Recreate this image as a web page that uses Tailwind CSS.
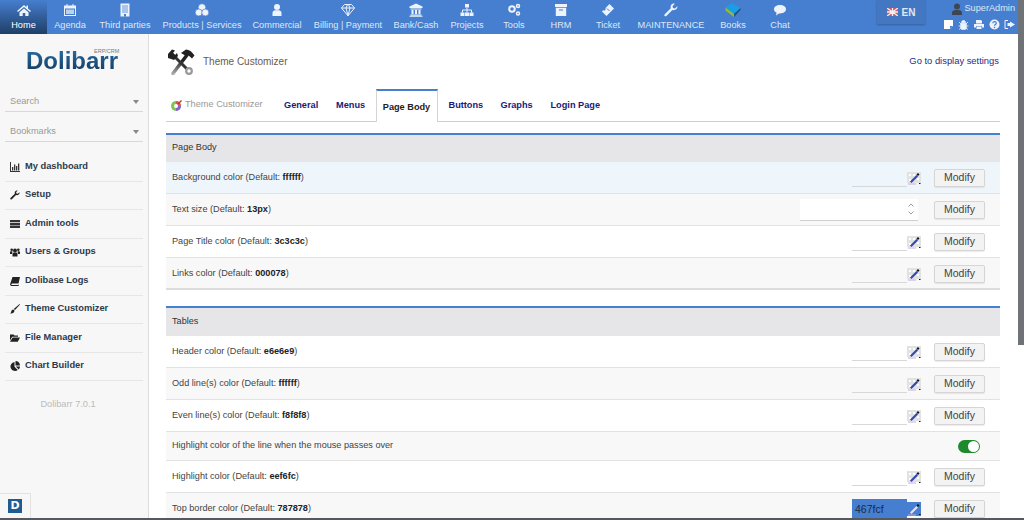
<!DOCTYPE html>
<html lang="en">
<head>
    <meta charset="UTF-8">
    <title>Theme Customizer</title>
    <script src="https://cdn.jsdelivr.net/npm/@tailwindcss/browser@4"></script>
</head>
<body class="h-[520px] overflow-hidden bg-white font-['Liberation_Sans',Arial,sans-serif] relative">
    <!-- top bar -->
    <header class="h-[34px] bg-[#467fcf] flex text-[9.2px] whitespace-nowrap text-[#dfe8f6]">
        <a class="w-[47px] flex flex-col items-center pt-[3px] bg-gradient-to-b from-[#467fcf] to-[#1f3f68] text-white">
            <svg class="w-[14px] h-[14px]" viewBox="0 0 14 14" fill="#eef3fb"><path d="M7 2 0 8l1 1 6-5 6 5 1-1-3-2.600V2.500H9.500v1.800zM2.500 9.200 7 5.400l4.500 3.800V13H8.300V10H5.700v3H2.500z"/></svg>
            <span class="mt-[2px]">Home</span>
        </a>
        <a class="w-[46px] flex flex-col items-center pt-[3px]">
            <svg class="w-[14px] h-[14px]" viewBox="0 0 14 14" fill="#eef3fb"><path d="M1 2.500h2.500V1h1v1.500h5V1h1v1.500H13V13H1zM2 5.500v6.500h10V5.500z"/><path d="M3 6.500h8v4.500H3z" opacity=".7"/></svg>
            <span class="mt-[2px]">Agenda</span>
        </a>
        <a class="w-[64px] flex flex-col items-center pt-[3px]">
            <svg class="w-[14px] h-[14px]" viewBox="0 0 14 14"><path d="M2.500 0.500h9v13h-9z" fill="#eef3fb"/><path d="M4 3h6M4 5h6M4 7h6M4 9h6" stroke="#467fcf" stroke-width=".8"/><path d="M6 11h2v2.500H6z" fill="#467fcf"/></svg>
            <span class="mt-[2px]">Third parties</span>
        </a>
        <a class="w-[90px] flex flex-col items-center pt-[3px]">
            <svg class="w-[14px] h-[14px]" viewBox="0 0 14 14" fill="#eef3fb" stroke="#467fcf" stroke-width=".7"><circle cx="7" cy="4.500" r="3.800"/><circle cx="3.700" cy="9.500" r="3.500"/><circle cx="10.300" cy="9.500" r="3.500"/></svg>
            <span class="mt-[2px]">Products | Services</span>
        </a>
        <a class="w-[60px] flex flex-col items-center pt-[3px]">
            <svg class="w-[14px] h-[14px]" viewBox="0 0 14 14" fill="#eef3fb"><circle cx="7" cy="4" r="3"/><path d="M2.500 13V9.800C2.500 8 4 7.200 5 7.200h4c1 0 2.500.8 2.500 2.600V13z"/></svg>
            <span class="mt-[2px]">Commercial</span>
        </a>
        <a class="w-[82px] flex flex-col items-center pt-[3px]">
            <svg class="w-[14px] h-[14px]" viewBox="0 0 14 14" fill="none" stroke="#eef3fb" stroke-width="1"><path d="M3.500 1.500h7L13.500 5 7 12.800.5 5zM.5 5h13M5 5l2 7.800L9 5 7.500 1.500h-1z"/></svg>
            <span class="mt-[2px]">Billing | Payment</span>
        </a>
        <a class="w-[54px] flex flex-col items-center pt-[3px]">
            <svg class="w-[14px] h-[14px]" viewBox="0 0 14 14" fill="#eef3fb"><path d="M7 .5 13.500 3.500V5H.5V3.500zM1.500 5.500h11v1h-11zM2.500 7h2v4h-2zM6 7h2v4H6zM9.500 7h2v4h-2zM1.500 11.500h11v1h-11zM.5 12.800h13v1H.5z"/></svg>
            <span class="mt-[2px]">Bank/Cash</span>
        </a>
        <a class="w-[48px] flex flex-col items-center pt-[3px]">
            <svg class="w-[14px] h-[14px]" viewBox="0 0 14 14" fill="#eef3fb"><path d="M5 1h4v3.500H5zM.5 9.500h4V13h-4zM5 9.500h4V13H5zM9.500 9.500h4V13h-4z"/><path d="M2.500 9.500V7h9v2.500M7 4.500v5" fill="none" stroke="#eef3fb"/></svg>
            <span class="mt-[2px]">Projects</span>
        </a>
        <a class="w-[46px] flex flex-col items-center pt-[3px]">
            <svg class="w-[14px] h-[14px]" viewBox="0 0 14 14" fill="none" stroke="#eef3fb" stroke-width="2"><circle cx="5" cy="6" r="2.800"/><circle cx="11" cy="3" r="1.500" stroke-width="1.500"/><circle cx="11" cy="10.500" r="1.500" stroke-width="1.500"/></svg>
            <span class="mt-[2px]">Tools</span>
        </a>
        <a class="w-[48px] flex flex-col items-center pt-[3px]">
            <svg class="w-[14px] h-[14px]" viewBox="0 0 14 14" fill="#eef3fb"><path d="M1 1h12v3H1zM1.800 4.800h10.400V13H1.800z"/><path d="M5 6.500h4v1H5z" fill="#467fcf"/></svg>
            <span class="mt-[2px]">HRM</span>
        </a>
        <a class="w-[46px] flex flex-col items-center pt-[3px]">
            <svg class="w-[14px] h-[14px]" viewBox="0 0 14 14" fill="#eef3fb"><path d="M8.500 1 13 5.500 5.500 13 1 8.500l1.200-1.200c.8.500 1.500.3 2-.1.500-.6.600-1.300.1-2z"/><path d="M6 5.500 8.500 8" stroke="#467fcf" stroke-width="1"/></svg>
            <span class="mt-[2px]">Ticket</span>
        </a>
        <a class="w-[80px] flex flex-col items-center pt-[3px]">
            <svg class="w-[14px] h-[14px]" viewBox="0 0 14 14" fill="#eef3fb"><path d="M13.200 3.200 11 5.400 9 5 8.600 3 10.800.8C8.700 0 6.500 1.500 6.600 4c0 .5.100.9.200 1.200L1 11c-.8.800-.8 1.300-.3 1.900s1.200.6 1.900-.1l5.800-5.800c2.700.9 5.700-1.300 4.800-3.800z"/></svg>
            <span class="mt-[2px]">MAINTENANCE</span>
        </a>
        <a class="w-[44px] flex flex-col items-center pt-[3px]">
            <svg class="w-[16px] h-[14px] " viewBox="0 0 16 14"><path d="M6.500 0 15.500 5 9 11 .5 4.500z" fill="#1a9fe6"/><path d="M.5 4.500 9 11v3L.5 7.500z" fill="#9ab83a"/><path d="M9 11l6.500-6v2L9 14z" fill="#23507a"/></svg>
            <span class="mt-[2px]">Books</span>
        </a>
        <a class="w-[50px] flex flex-col items-center pt-[3px]">
            <svg class="w-[14px] h-[14px]" viewBox="0 0 14 14" fill="#eef3fb"><path d="M7 2c3.500 0 6 1.900 6 4.200S10.500 10.400 7 10.400H6L3 12.500l.6-2.800C2 9 1 7.700 1 6.200 1 3.900 3.500 2 7 2z"/></svg>
            <span class="mt-[2px]">Chat</span>
        </a>
        <div class="ml-[72px] w-[48px] h-[24px] bg-[#4377c2] shadow-[0_1px_2px_rgba(0,0,0,0.25)] flex items-center justify-center gap-[4px] text-[10px] font-bold">
            <svg class="w-[11px] h-[8px]" viewBox="0 0 11 8"><path d="M0 0h11v8H0z" fill="#c9596b"/><path d="M0 0l11 8M11 0 0 8M5.500 0v8M0 4h11" stroke="#f3eef0" stroke-width="1.300"/></svg>
            <span>EN</span>
        </div>
        <div class="ml-[16px] w-[76px] flex flex-col items-end pr-[2px] pt-[3px]">
            <div class="flex items-center gap-[2px] h-[12px] text-[9.200px]">
                <svg class="w-[10px] h-[12px]" viewBox="0 0 10 12" fill="#3d4653"><circle cx="5" cy="3.500" r="3"/><path d="M0 12V9.500C0 8 2 7 3 7h4c1 0 3 1 3 2.500V12z"/></svg>
                <span>SuperAdmin</span>
            </div>
            <div class="flex items-center gap-[4px] mt-[4px] h-[11px]">
                <svg class="w-[11px] h-[11px]" viewBox="0 0 11 11" fill="#fff"><path d="M1 1h9v6L7 10H1z"/><path d="M7 7h3l-3 3z" fill="#467fcf"/></svg>
                <svg class="w-[11px] h-[11px]" viewBox="0 0 11 11" fill="#eef3fb"><path d="M3.500 3.500a2 2 0 0 1 4 0zM2.700 4.300h5.600v5C8.300 10 7 10.800 5.500 10.800S2.700 10 2.700 9.300zM1 3l2 2M10 3 8 5M.5 7h2M8.500 7h2M1 10.500 3 9M10 10.500 8 9" stroke="#eef3fb" stroke-width=".8"/></svg>
                <svg class="w-[12px] h-[11px]" viewBox="0 0 11 11" fill="#eef3fb"><path d="M2.500 1h5L8.500 2v2.500h-6zM.5 5h10v3.500H8.500V7h-6v1.500h-2zM3 7.500h5V10H3z"/></svg>
                <svg class="w-[11px] h-[11px]" viewBox="0 0 11 11"><circle cx="5.500" cy="5.500" r="5" fill="#eef3fb"/><path d="M3.800 4.200c.2-2 3.500-2 3.500 0 0 1.300-1.800 1.200-1.800 2.600" fill="none" stroke="#467fcf" stroke-width="1.200"/><path d="M4.800 7.800h1.400v1.300H4.800z" fill="#467fcf"/></svg>
                <svg class="w-[11px] h-[11px]" viewBox="0 0 11 11" fill="#eef3fb"><path d="M6 2.500 11 5.500 6 8.500V7H3.500V4H6z"/><path d="M4 1.500H1v8h3" fill="none" stroke="#eef3fb" stroke-width="1"/></svg>
            </div>
        </div>
    </header>

    <div class="flex h-[486px]">
        <!-- sidebar -->
        <aside class="w-[149px] shrink-0 bg-[#f7f7f7] border-r border-[#dcdcdc] relative">
            <div class="relative h-[56px] pl-[26px] pt-[14px]">
                <span class="block text-[24px] leading-[26px] font-bold text-transparent bg-clip-text bg-gradient-to-b from-[#2a6ea5] to-[#12395f] w-fit">Dolibarr</span>
                <span class="absolute left-[94px] top-[15px] text-[5.500px] leading-none text-[#777]">ERP/CRM</span>
            </div>
            <div class="mx-[5px] h-[20px] mt-[2px] border-b border-[#d8d8d8] flex items-center justify-between pl-[5px] pr-[4px] text-[9.200px] text-[#999]">
                <span>Search</span><span class="border-x-[3.500px] border-x-transparent border-t-[4px] border-t-[#888]"></span>
            </div>
            <div class="mx-[5px] h-[20px] mt-[10px] border-b border-[#d8d8d8] flex items-center justify-between pl-[5px] pr-[4px] text-[9.200px] text-[#999]">
                <span>Bookmarks</span><span class="border-x-[3.500px] border-x-transparent border-t-[4px] border-t-[#888]"></span>
            </div>
            <nav class="mt-[11px] text-[9.300px] font-bold text-[#2d3a4a]">
                <a class="mx-[5px] h-[28.500px] border-b border-[#e6e6e6] flex items-center gap-[5px] pl-[5px]">
                    <svg class="w-[10px] h-[10px]" viewBox="0 0 10 10" fill="#333"><path d="M0 0h1v9h9v1H0zM2 5h1.300v3.500H2zM4 2.500h1.300v6H4zM6 4h1.300v4.500H6zM8 1.500h1.300v7H8z"/></svg>
                    <span>My dashboard</span>
                </a>
                <a class="mx-[5px] h-[28.500px] border-b border-[#e6e6e6] flex items-center gap-[5px] pl-[5px]">
                    <svg class="w-[10px] h-[10px]" viewBox="0 0 14 14" fill="#222"><path d="M13.200 3.200 11 5.400 9 5 8.600 3 10.800.8C8.700 0 6.500 1.500 6.600 4c0 .5.100.9.200 1.200L1 11c-.8.800-.8 1.300-.3 1.900s1.200.6 1.900-.1l5.800-5.800c2.700.9 5.700-1.300 4.800-3.800z"/></svg>
                    <span>Setup</span>
                </a>
                <a class="mx-[5px] h-[28.500px] border-b border-[#e6e6e6] flex items-center gap-[5px] pl-[5px]">
                    <svg class="w-[10px] h-[10px]" viewBox="0 0 10 10" fill="#333"><path d="M0 1h10v2.300H0zM0 3.900h10v2.300H0zM0 6.800h10v2.300H0z"/></svg>
                    <span>Admin tools</span>
                </a>
                <a class="mx-[5px] h-[28.500px] border-b border-[#e6e6e6] flex items-center gap-[5px] pl-[5px]">
                    <svg class="w-[10px] h-[10px]" viewBox="0 0 10 10" fill="#222"><circle cx="5" cy="3.500" r="2"/><circle cx="1.700" cy="2.700" r="1.300"/><circle cx="8.300" cy="2.700" r="1.300"/><path d="M2.500 9.500V7c0-1 1-1.500 1.500-1.500h2c.5 0 1.500.5 1.500 1.500v2.500zM0 7V5.300c0-.5.500-1 1-1h1.500L2 7zM10 7V5.300c0-.5-.5-1-1-1H7.500L8 7z"/></svg>
                    <span>Users &amp; Groups</span>
                </a>
                <a class="mx-[5px] h-[28.500px] border-b border-[#e6e6e6] flex items-center gap-[5px] pl-[5px]">
                    <svg class="w-[10px] h-[10px]" viewBox="0 0 10 10" fill="#222"><path d="M2.500 1H10L8.500 7.500H2L1 9h7l1-.5L8.500 10H1L0 8.500z"/></svg>
                    <span>Dolibase Logs</span>
                </a>
                <a class="mx-[5px] h-[28.500px] border-b border-[#e6e6e6] flex items-center gap-[5px] pl-[5px]">
                    <svg class="w-[10px] h-[10px]" viewBox="0 0 10 10" fill="#222"><path d="M9.500 0 10 .5 5 6 3.800 5zM3.300 5.500l1.200 1C4.500 8.500 2.500 10 0 9.500c1.300-.7 1-1.500 1.500-2.700.3-.7 1-1.300 1.800-1.300z"/></svg>
                    <span>Theme Customizer</span>
                </a>
                <a class="mx-[5px] h-[28.500px] border-b border-[#e6e6e6] flex items-center gap-[5px] pl-[5px]">
                    <svg class="w-[10px] h-[10px]" viewBox="0 0 10 10" fill="#222"><path d="M0 1.500h3.500l1 1H8v1.300H2.200L0 7.500zM2.700 4.500H10L7.800 8.800H0z"/></svg>
                    <span>File Manager</span>
                </a>
                <a class="mx-[5px] h-[28.500px] border-b border-[#e6e6e6] flex items-center gap-[5px] pl-[5px]">
                    <svg class="w-[10px] h-[10px]" viewBox="0 0 10 10" fill="#222"><path d="M4.500 1v4.700l3.300 3.300A4.500 4.500 0 1 1 4.500 1zM5.500 0A4.500 4.500 0 0 1 10 4.500H5.500zM5.800 5.500H10A4.500 4.500 0 0 1 8.800 8.500z"/></svg>
                    <span>Chart Builder</span>
                </a>
            </nav>
            <p class="mt-[17px] text-center text-[9.200px] text-[#bbb] pr-[12px]">Dolibarr 7.0.1</p>
            <div class="absolute left-0 bottom-[2px] w-[31px] h-[25px] border-t border-r border-[#e2e2e2] flex items-center justify-center">
                <span class="w-[14px] h-[14px] bg-[#1f5c93] text-white text-[11px] leading-[14px] font-bold text-center font-['DejaVu_Sans',sans-serif]">D</span>
            </div>
        </aside>

        <!-- main -->
        <main class="flex-1 min-w-0 pl-[17px] pr-[24px]">
            <div class="flex items-center h-[55px]">
                <svg class="w-[28px] h-[26px] ml-[1px]" viewBox="0 0 28 26">
                    <defs><linearGradient id="toolFade" x1="0" y1="0" x2="0" y2="1"><stop offset="0.300" stop-color="#222"/><stop offset="1" stop-color="#aaa"/></linearGradient></defs>
                    <path d="M6 24.500 20 6" stroke="url(#toolFade)" stroke-width="3.500" stroke-linecap="round" gradientUnits="userSpaceOnUse"/>
                    <path d="M5 5 20 20" stroke="#333" stroke-width="3"/>
                    <circle cx="22" cy="22" r="2.800" fill="none" stroke="#999" stroke-width="2.200"/>
                    <path d="M1 5 5 .5 8 1.500 6 4l2 2 2-2 1 3-4 4-3-1-3-1zM14 4l5-3.500c3 0 6 2 8.500 6l-2.500 3-4-3.500-2 1z" fill="#222"/>
                </svg>
                <span class="ml-[8px] text-[10px] text-[#6b5a48]">Theme Customizer</span>
                <a class="ml-auto mr-[1px] text-[9.400px] text-[#2a2a88]">Go to display settings</a>
            </div>
            <div class="h-[32.500px] border-b border-[#cfcfcf] flex items-end text-[9.200px] font-bold text-[#1a1a78]">
                <div class="flex items-center h-[31px] font-normal text-[#999] pl-[5px] gap-[3px] w-[118px]">
                    <svg class="w-[11px] h-[11px]" viewBox="0 0 11 11"><circle cx="5" cy="6" r="5" fill="#7ac74f"/><path d="M5 6V1a5 5 0 0 1 5 5z" fill="#e2574c"/><path d="M5 6h5a5 5 0 0 1-5 5z" fill="#8e5fd0"/><circle cx="5" cy="6" r="2" fill="#fff"/><path d="M7 4 10.500.5" stroke="#a33" stroke-width="1.200"/></svg>
                    <span>Theme Customizer</span>
                </div>
                <a class="h-[31px] leading-[31px] w-[52px]">General</a>
                <a class="h-[31px] leading-[31px] w-[39.500px]">Menus</a>
                <a class="h-[32.500px] leading-[32px] w-[62px] -mb-px bg-white border-t-2 border-x border-t-[#467fcf] border-x-[#d5d5d5] text-center text-[#222]">Page Body</a>
                <a class="h-[31px] leading-[31px] ml-[11px] w-[52px]">Buttons</a>
                <a class="h-[31px] leading-[31px] w-[50px]">Graphs</a>
                <a class="h-[31px] leading-[31px]">Login Page</a>
            </div>

            <div class="mt-[11px] border-t-2 border-[#467fcf] text-[9.150px] text-[#444]">
                <div class="h-[27px] bg-[#e6e6e9] flex items-center pl-[6px] text-[#333]">Page Body</div>
                <div class="h-[32px] pt-[2px] bg-[#eef6fc] border-b border-[#e2e2e2] flex items-center pl-[6px] pr-[15px]">
                    <span>Background color (Default: <b class="text-[#222]">ffffff</b>)</span>
                    <span class="ml-auto w-[55px] h-[18px] border-b border-[#d8d8d8]"></span>
                    <svg class="w-[14px] h-[14px]" viewBox="0 0 14 14"><path d="M0 1h14v11H0z" fill="#e2e2e2"/><path d="M2 3h2v2H2zM6 3h2v2H6zM10 7h2v2h-2zM2 8h2v2H2z" fill="#fff"/><path d="M3 10.500 9.500 4l1.500 1.500L4.500 12z" fill="#2f49b5"/><path d="M9.500 3.500 11 2l1.500 1.500L11 5z" fill="#111"/><path d="M1 12.500h8v1H1z" fill="#c9a8d8"/><path d="M12 12h1.500v1H12z" fill="#111"/></svg>
                    <button class="ml-[13px] w-[51px] h-[18px] bg-[#f3f3f3] border border-[#d5d5d5] rounded-[2px] text-[10.500px] text-[#444] shadow-[0_1px_1px_rgba(0,0,0,0.08)]">Modify</button>
                </div>
                <div class="h-[32px] pt-[2px] bg-[#f8f8f8] border-b border-[#e2e2e2] flex items-center pl-[6px] pr-[15px]">
                    <span>Text size (Default: <b class="text-[#222]">13px</b>)</span>
                    <span class="ml-auto mr-[3px] w-[118px] h-[22px] mt-[-1px] bg-white border-b border-[#d0d0d0] flex items-center justify-end pr-[3px]">
                        <svg class="w-[8px] h-[14px]" viewBox="0 0 8 14" fill="none" stroke="#888" stroke-width=".8"><path d="M1.500 4.500 4 2l2.500 2.500M1.500 9.500 4 12l2.500-2.500"/></svg>
                    </span>
                    <button class="ml-[13px] w-[51px] h-[18px] bg-[#f3f3f3] border border-[#d5d5d5] rounded-[2px] text-[10.500px] text-[#444] shadow-[0_1px_1px_rgba(0,0,0,0.08)]">Modify</button>
                </div>
                <div class="h-[32px] pt-[2px] bg-white border-b border-[#e2e2e2] flex items-center pl-[6px] pr-[15px]">
                    <span>Page Title color (Default: <b class="text-[#222]">3c3c3c</b>)</span>
                    <span class="ml-auto w-[55px] h-[18px] border-b border-[#d8d8d8]"></span>
                    <svg class="w-[14px] h-[14px]" viewBox="0 0 14 14"><path d="M0 1h14v11H0z" fill="#e2e2e2"/><path d="M2 3h2v2H2zM6 3h2v2H6zM10 7h2v2h-2zM2 8h2v2H2z" fill="#fff"/><path d="M3 10.500 9.500 4l1.500 1.500L4.500 12z" fill="#2f49b5"/><path d="M9.500 3.500 11 2l1.500 1.500L11 5z" fill="#111"/><path d="M1 12.500h8v1H1z" fill="#c9a8d8"/><path d="M12 12h1.500v1H12z" fill="#111"/></svg>
                    <button class="ml-[13px] w-[51px] h-[18px] bg-[#f3f3f3] border border-[#d5d5d5] rounded-[2px] text-[10.500px] text-[#444] shadow-[0_1px_1px_rgba(0,0,0,0.08)]">Modify</button>
                </div>
                <div class="h-[32px] pt-[2px] bg-[#f8f8f8] border-b-2 border-[#dcdcdc] flex items-center pl-[6px] pr-[15px]">
                    <span>Links color (Default: <b class="text-[#222]">000078</b>)</span>
                    <span class="ml-auto w-[55px] h-[18px] border-b border-[#d8d8d8]"></span>
                    <svg class="w-[14px] h-[14px]" viewBox="0 0 14 14"><path d="M0 1h14v11H0z" fill="#e2e2e2"/><path d="M2 3h2v2H2zM6 3h2v2H6zM10 7h2v2h-2zM2 8h2v2H2z" fill="#fff"/><path d="M3 10.500 9.500 4l1.500 1.500L4.500 12z" fill="#2f49b5"/><path d="M9.500 3.500 11 2l1.500 1.500L11 5z" fill="#111"/><path d="M1 12.500h8v1H1z" fill="#c9a8d8"/><path d="M12 12h1.500v1H12z" fill="#111"/></svg>
                    <button class="ml-[13px] w-[51px] h-[18px] bg-[#f3f3f3] border border-[#d5d5d5] rounded-[2px] text-[10.500px] text-[#444] shadow-[0_1px_1px_rgba(0,0,0,0.08)]">Modify</button>
                </div>
            </div>

            <div class="mt-[16px] border-t-2 border-[#467fcf] text-[9.150px] text-[#444]">
                <div class="h-[28px] pt-[1px] bg-[#e6e6e9] flex items-center pl-[6px] text-[#333]">Tables</div>
                <div class="h-[32px] pt-[2px] bg-white border-b border-[#e2e2e2] flex items-center pl-[6px] pr-[15px]">
                    <span>Header color (Default: <b class="text-[#222]">e6e6e9</b>)</span>
                    <span class="ml-auto w-[55px] h-[18px] border-b border-[#d8d8d8]"></span>
                    <svg class="w-[14px] h-[14px]" viewBox="0 0 14 14"><path d="M0 1h14v11H0z" fill="#e2e2e2"/><path d="M2 3h2v2H2zM6 3h2v2H6zM10 7h2v2h-2zM2 8h2v2H2z" fill="#fff"/><path d="M3 10.500 9.500 4l1.500 1.500L4.500 12z" fill="#2f49b5"/><path d="M9.500 3.500 11 2l1.500 1.500L11 5z" fill="#111"/><path d="M1 12.500h8v1H1z" fill="#c9a8d8"/><path d="M12 12h1.500v1H12z" fill="#111"/></svg>
                    <button class="ml-[13px] w-[51px] h-[18px] bg-[#f3f3f3] border border-[#d5d5d5] rounded-[2px] text-[10.500px] text-[#444] shadow-[0_1px_1px_rgba(0,0,0,0.08)]">Modify</button>
                </div>
                <div class="h-[32px] pt-[2px] bg-[#f8f8f8] border-b border-[#e2e2e2] flex items-center pl-[6px] pr-[15px]">
                    <span>Odd line(s) color (Default: <b class="text-[#222]">ffffff</b>)</span>
                    <span class="ml-auto w-[55px] h-[18px] border-b border-[#d8d8d8]"></span>
                    <svg class="w-[14px] h-[14px]" viewBox="0 0 14 14"><path d="M0 1h14v11H0z" fill="#e2e2e2"/><path d="M2 3h2v2H2zM6 3h2v2H6zM10 7h2v2h-2zM2 8h2v2H2z" fill="#fff"/><path d="M3 10.500 9.500 4l1.500 1.500L4.500 12z" fill="#2f49b5"/><path d="M9.500 3.500 11 2l1.500 1.500L11 5z" fill="#111"/><path d="M1 12.500h8v1H1z" fill="#c9a8d8"/><path d="M12 12h1.500v1H12z" fill="#111"/></svg>
                    <button class="ml-[13px] w-[51px] h-[18px] bg-[#f3f3f3] border border-[#d5d5d5] rounded-[2px] text-[10.500px] text-[#444] shadow-[0_1px_1px_rgba(0,0,0,0.08)]">Modify</button>
                </div>
                <div class="h-[32px] pt-[2px] bg-white border-b border-[#e2e2e2] flex items-center pl-[6px] pr-[15px]">
                    <span>Even line(s) color (Default: <b class="text-[#222]">f8f8f8</b>)</span>
                    <span class="ml-auto w-[55px] h-[18px] border-b border-[#d8d8d8]"></span>
                    <svg class="w-[14px] h-[14px]" viewBox="0 0 14 14"><path d="M0 1h14v11H0z" fill="#e2e2e2"/><path d="M2 3h2v2H2zM6 3h2v2H6zM10 7h2v2h-2zM2 8h2v2H2z" fill="#fff"/><path d="M3 10.500 9.500 4l1.500 1.500L4.500 12z" fill="#2f49b5"/><path d="M9.500 3.500 11 2l1.500 1.500L11 5z" fill="#111"/><path d="M1 12.500h8v1H1z" fill="#c9a8d8"/><path d="M12 12h1.500v1H12z" fill="#111"/></svg>
                    <button class="ml-[13px] w-[51px] h-[18px] bg-[#f3f3f3] border border-[#d5d5d5] rounded-[2px] text-[10.500px] text-[#444] shadow-[0_1px_1px_rgba(0,0,0,0.08)]">Modify</button>
                </div>
                <div class="h-[29px] pt-[1px] bg-[#f8f8f8] border-b border-[#e2e2e2] flex items-center pl-[6px] pr-[20px]">
                    <span>Highlight color of the line when the mouse passes over</span>
                    <span class="ml-auto w-[22px] h-[13px] rounded-full bg-[#1e8a2e] flex justify-end items-center pr-[1px]"><span class="w-[11px] h-[11px] rounded-full bg-white"></span></span>
                </div>
                <div class="h-[32px] pt-[2px] bg-white border-b border-[#e2e2e2] flex items-center pl-[6px] pr-[15px]">
                    <span>Highlight color (Default: <b class="text-[#222]">eef6fc</b>)</span>
                    <span class="ml-auto w-[55px] h-[18px] border-b border-[#d8d8d8]"></span>
                    <svg class="w-[14px] h-[14px]" viewBox="0 0 14 14"><path d="M0 1h14v11H0z" fill="#e2e2e2"/><path d="M2 3h2v2H2zM6 3h2v2H6zM10 7h2v2h-2zM2 8h2v2H2z" fill="#fff"/><path d="M3 10.500 9.500 4l1.500 1.500L4.500 12z" fill="#2f49b5"/><path d="M9.500 3.500 11 2l1.500 1.500L11 5z" fill="#111"/><path d="M1 12.500h8v1H1z" fill="#c9a8d8"/><path d="M12 12h1.500v1H12z" fill="#111"/></svg>
                    <button class="ml-[13px] w-[51px] h-[18px] bg-[#f3f3f3] border border-[#d5d5d5] rounded-[2px] text-[10.500px] text-[#444] shadow-[0_1px_1px_rgba(0,0,0,0.08)]">Modify</button>
                </div>
                <div class="h-[32px] pt-[2px] bg-[#f8f8f8] border-b border-[#e2e2e2] flex items-center pl-[6px] pr-[15px]">
                    <span>Top border color (Default: <b class="text-[#222]">787878</b>)</span>
                    <span class="ml-auto w-[55px] h-[21px] bg-[#467fcf] pl-[3px] leading-[21px] text-[10.500px] text-[#1c2a40]">467fcf</span>
                    <svg class="w-[14px] h-[14px] bg-[#467fcf]" viewBox="0 0 14 14"><path d="M3 10.500 9.500 4l1.500 1.500L4.500 12z" fill="#dfe3f5"/><path d="M9.500 3.500 11 2l1.500 1.500L11 5z" fill="#111"/><path d="M1 12.500h8v1H1z" fill="#c9a8d8"/><path d="M12 12h1.500v1H12z" fill="#111"/></svg>
                    <button class="ml-[13px] w-[51px] h-[18px] bg-[#f3f3f3] border border-[#d5d5d5] rounded-[2px] text-[10.500px] text-[#444] shadow-[0_1px_1px_rgba(0,0,0,0.08)]">Modify</button>
                </div>
            </div>
        </main>
    </div>

    <!-- window edges -->
    <div class="absolute top-0 right-0 w-[6px] h-[345px] bg-[#6f7277]"></div>
    <div class="absolute left-0 right-0 bottom-0 h-[2px] bg-[#55585c]"></div>
</body>
</html>
